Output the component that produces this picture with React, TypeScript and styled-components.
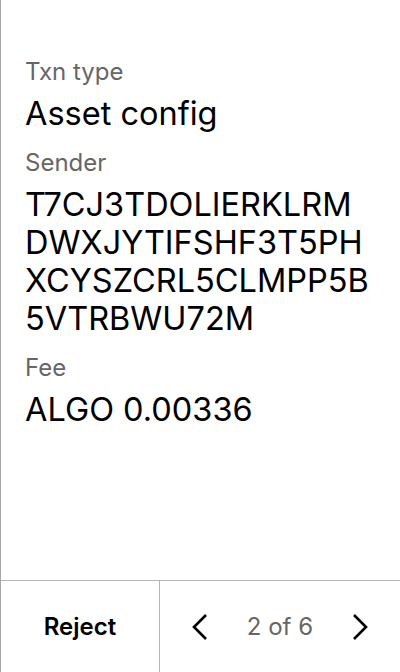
import React from "react";
import styled, { createGlobalStyle } from "styled-components";

const Global = createGlobalStyle`
  html, body { margin: 0; padding: 0; background: #fff; }
  body { font-family: Inter, "Noto Sans", sans-serif; }
  * { box-sizing: border-box; }
`;

const Page = styled.div`
  width: 400px;
  height: 672px;
  display: flex;
  flex-direction: column;
  border-left: 1px solid #a8a8a8;
  background: #fff;
`;

const Content = styled.div`
  flex: 1;
  display: flex;
  flex-direction: column;
  gap: 15px;
  padding: 57px 24px 0 24px;
`;

const Field = styled.div`
  display: flex;
  flex-direction: column;
  gap: 9px;
`;

const Label = styled.div`
  font-size: 24px;
  line-height: 29px;
  color: #666666;
`;

const Value = styled.div`
  font-size: 32.5px;
  line-height: 38px;
  color: #000;
  word-break: break-all;
`;

const Footer = styled.div`
  height: 92px;
  display: flex;
  border-top: 1px solid #b5b5b5;
`;

const RejectButton = styled.button`
  width: 159px;
  border: none;
  border-right: 1px solid #b5b5b5;
  background: transparent;
  font-family: inherit;
  font-size: 24px;
  font-weight: 600;
  color: #000;
  padding: 0;
`;

const Pager = styled.div`
  flex: 1;
  display: flex;
  align-items: center;
  justify-content: space-between;
  padding: 0 30px;
`;

const NavButton = styled.button`
  border: none;
  background: transparent;
  padding: 0;
  width: 20px;
  height: 28px;
  display: flex;
  align-items: center;
  justify-content: center;
`;

const PageCount = styled.span`
  font-size: 24px;
  color: #666666;
`;

const Chevron = ({ dir }: { dir: "left" | "right" }) => (
  <svg width="16" height="28" viewBox="0 0 16 28" fill="none">
    <polyline
      points={dir === "left" ? "14,2 2,14 14,26" : "2,2 14,14 2,26"}
      stroke="#000"
      strokeWidth="2.6"
      strokeLinecap="butt"
      strokeLinejoin="miter"
    />
  </svg>
);

export default function App() {
  return (
    <>
      <Global />
      <Page>
        <Content>
          <Field>
            <Label>Txn type</Label>
            <Value>Asset config</Value>
          </Field>
          <Field>
            <Label>Sender</Label>
            <Value>
              T7CJ3TDOLIERKLRM
              <br />
              DWXJYTIFSHF3T5PH
              <br />
              XCYSZCRL5CLMPP5B
              <br />
              5VTRBWU72M
            </Value>
          </Field>
          <Field>
            <Label>Fee</Label>
            <Value>ALGO 0.00336</Value>
          </Field>
        </Content>
        <Footer>
          <RejectButton>Reject</RejectButton>
          <Pager>
            <NavButton aria-label="Previous">
              <Chevron dir="left" />
            </NavButton>
            <PageCount>2 of 6</PageCount>
            <NavButton aria-label="Next">
              <Chevron dir="right" />
            </NavButton>
          </Pager>
        </Footer>
      </Page>
    </>
  );
}
